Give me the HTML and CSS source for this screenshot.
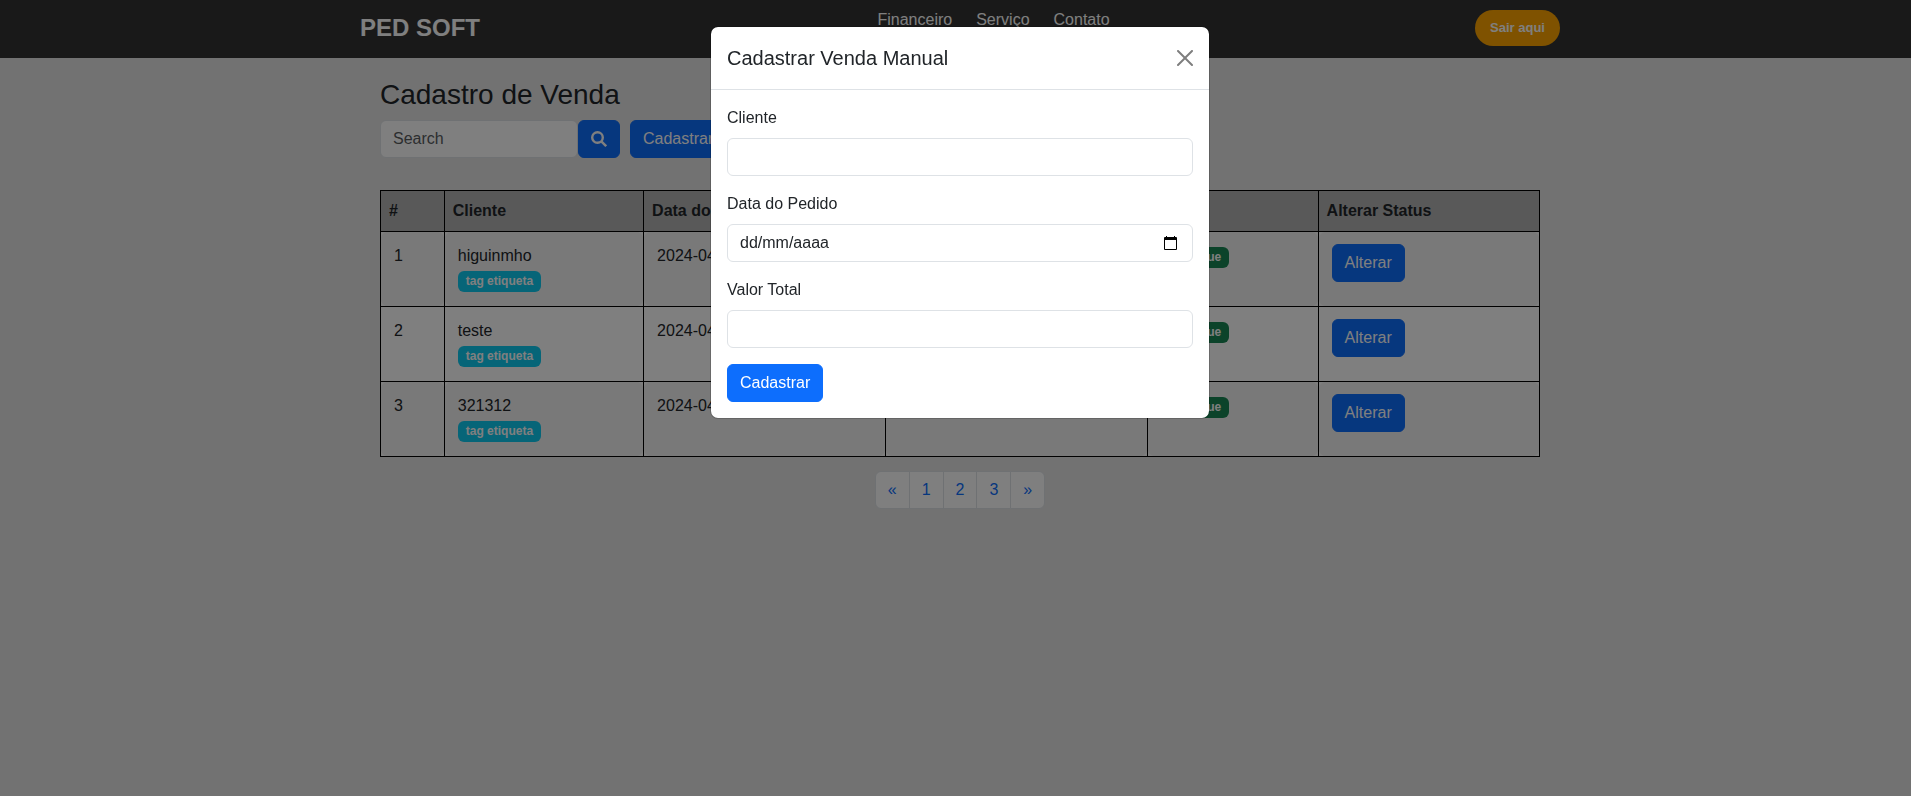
FILE: index.html
```html
<!DOCTYPE html>
<html lang="pt-BR">
<head>
<meta charset="utf-8">
<title>PED SOFT</title>
<link rel="stylesheet" href="styles.css">
</head>
<body>
<div class="page">
  <header class="topbar">
    <div class="topbar-inner">
      <span class="logo">PED SOFT</span>
      <nav>
        <ul class="menu">
          <li><a href="#">Financeiro</a></li>
          <li><a href="#">Serviço</a></li>
          <li><a href="#">Contato</a></li>
        </ul>
      </nav>
      <button class="logout" type="button">Sair aqui</button>
    </div>
  </header>
  <main class="content">
    <h1 class="title">Cadastro de Venda</h1>
    <div class="tools">
      <form class="search">
        <input class="field" type="text" placeholder="Search" aria-label="Search">
        <button class="btn" type="button" aria-label="Buscar">
          <svg class="search-icon" viewBox="0 0 16 16" aria-hidden="true"><circle cx="6.500" cy="6.500" r="5.300"/><path d="M10.300 10.300 15.200 15.200"/></svg>
        </button>
      </form>
      <button class="btn" type="button">Cadastrar Venda</button>
    </div>
    <table class="sales">
      <colgroup><col class="c-id"><col class="c-client"><col class="c-date"><col class="c-total"><col class="c-status"><col class="c-action"></colgroup>
      <thead>
        <tr><th>#</th><th>Cliente</th><th>Data do Pedido</th><th>Valor Total</th><th>Status</th><th>Alterar Status</th></tr>
      </thead>
      <tbody>
        <tr><td>1</td><td>higuinmho<span class="badge tag">tag etiqueta</span></td><td>2024-04-10</td><td>100</td><td><span class="badge done">Entregue</span></td><td><button class="btn" type="button">Alterar</button></td></tr>
        <tr><td>2</td><td>teste<span class="badge tag">tag etiqueta</span></td><td>2024-04-10</td><td>100</td><td><span class="badge done">Entregue</span></td><td><button class="btn" type="button">Alterar</button></td></tr>
        <tr><td>3</td><td>321312<span class="badge tag">tag etiqueta</span></td><td>2024-04-10</td><td>100</td><td><span class="badge done">Entregue</span></td><td><button class="btn" type="button">Alterar</button></td></tr>
      </tbody>
    </table>
    <nav aria-label="Páginas">
      <ul class="pagination">
        <li><a href="#">«</a></li>
        <li><a href="#">1</a></li>
        <li><a href="#">2</a></li>
        <li><a href="#">3</a></li>
        <li><a href="#">»</a></li>
      </ul>
    </nav>
  </main>
</div>
<div class="backdrop">
  <div class="modal" role="dialog" aria-modal="true" aria-labelledby="modal-title">
    <div class="modal-header">
      <h2 class="modal-title" id="modal-title">Cadastrar Venda Manual</h2>
      <button class="close" type="button" aria-label="Fechar">
        <svg viewBox="0 0 16 16" aria-hidden="true"><path d="M.293.293a1 1 0 0 1 1.414 0L8 6.586 14.293.293a1 1 0 1 1 1.414 1.414L9.414 8l6.293 6.293a1 1 0 0 1-1.414 1.414L8 9.414l-6.293 6.293a1 1 0 0 1-1.414-1.414L6.586 8 .293 1.707a1 1 0 0 1 0-1.414z"/></svg>
      </button>
    </div>
    <form class="modal-body">
      <div class="group">
        <label for="cliente">Cliente</label>
        <input class="field" id="cliente" type="text">
      </div>
      <div class="group">
        <label for="data">Data do Pedido</label>
        <div class="field date">
          <input id="data" type="text" placeholder="dd/mm/aaaa">
          <button type="button" aria-label="Abrir calendário">
            <svg viewBox="0 0 14 15" aria-hidden="true"><path d="M1 1h1V0h1v1h7V0h1v1h1a1 1 0 0 1 1 1v11a1 1 0 0 1-1 1H1a1 1 0 0 1-1-1V2a1 1 0 0 1 1-1zM1 4v9h11V4z" fill-rule="evenodd"/></svg>
          </button>
        </div>
      </div>
      <div class="group">
        <label for="valor">Valor Total</label>
        <input class="field" id="valor" type="text">
      </div>
      <button class="btn" type="button">Cadastrar</button>
    </form>
  </div>
</div>
</body>
</html>
```
FILE: styles.css
```css
*, *::before, *::after { box-sizing: border-box; }

body {
  margin: 0;
  overflow: hidden;
  background: #e5e5e5;
  color: #212529;
  font: 16px/24px "Liberation Sans", Arial, sans-serif;
}

button, input { font: inherit; color: inherit; }
button { cursor: pointer; }
a { text-decoration: none; }
ul { margin: 0; padding: 0; list-style: none; }

/* The layout is centred on the window plus a 9px gutter. */
.page {
  width: calc(100% + 9px);
  min-height: 100vh;
}

.topbar {
  padding: 8px 0 10px;
  background: #333;
  color: #fff;
}

.topbar-inner {
  display: flex;
  align-items: center;
  justify-content: space-between;
  max-width: 1200px;
  margin: 0 auto;
}

.logo { font-size: 24px; line-height: 36px; font-weight: 700; }

.menu {
  display: flex;
  gap: 24px;
  padding: 0 0 16px 32px;
}
.menu a { color: #fff; }

.logout {
  padding: 8px 15px;
  border: 0;
  border-radius: 20px;
  background: #ffa500;
  color: #fff;
  font-size: 13px;
  line-height: 20px;
  font-weight: 700;
}

.content {
  max-width: 1200px;
  margin: 0 auto;
  padding: 20px;
}

.title {
  margin: 0 0 8px;
  font-size: 28px;
  line-height: 34px;
  font-weight: 400;
}

.tools { display: flex; gap: 10px; margin-bottom: 32px; }
.search { display: flex; }
.search .field { width: 198px; }

.field {
  display: block;
  width: 100%;
  height: 38px;
  padding: 6px 12px;
  border: 1px solid #dee2e6;
  border-radius: 6px;
  background: #fff;
}
.field::placeholder { color: #595c5f; opacity: 1; }

.btn {
  padding: 6px 12px;
  border: 1px solid #0d6efd;
  border-radius: 6px;
  background: #0d6efd;
  color: #fff;
}

.search-icon {
  display: block;
  width: 16px;
  height: 16px;
  fill: none;
  stroke: #fff;
  stroke-width: 2.4;
}

.sales {
  width: 100%;
  border-collapse: collapse;
  table-layout: fixed;
  margin-bottom: 14px;
  background: #fff;
}
.c-id { width: 5.5%; }
.c-client { width: 17.2%; }
.c-date { width: 20.9%; }
.c-total { width: 22.6%; }
.c-status { width: 14.7%; }
.c-action { width: 19.1%; }

.sales th, .sales td {
  border: 1px solid #000;
  text-align: left;
  vertical-align: top;
}
.sales th { padding: 8px; background: #b3b3b3; }
.sales td { height: 75px; padding: 12px 13px; }

/* Shaded cells are rounded, so the white table shows at their corners. */
.sales tbody tr:nth-child(odd) td {
  background: radial-gradient(circle at 8px 8px, #f2f2f2 8px, transparent 9px) 0 0 / 16px 16px no-repeat,
    radial-gradient(circle at 8px 8px, #f2f2f2 8px, transparent 9px) 100% 0 / 16px 16px no-repeat,
    radial-gradient(circle at 8px 8px, #f2f2f2 8px, transparent 9px) 0 100% / 16px 16px no-repeat,
    radial-gradient(circle at 8px 8px, #f2f2f2 8px, transparent 9px) 100% 100% / 16px 16px no-repeat,
    linear-gradient(#f2f2f2, #f2f2f2) center / calc(100% - 16px) 100% no-repeat,
    linear-gradient(#f2f2f2, #f2f2f2) center / 100% calc(100% - 16px) no-repeat;
}

.badge {
  display: block;
  width: fit-content;
  padding: 4px 8px;
  border-radius: 6px;
  color: #fff;
  font-size: 12px;
  line-height: 13px;
  font-weight: 700;
}
.tag { margin-top: 3px; background: #0dcaf0; }
.done { margin-top: 3px; background: #198754; }

.pagination { display: flex; justify-content: center; }
.pagination a {
  display: block;
  padding: 6px 12px;
  border: 1px solid #dee2e6;
  background: #fff;
  color: #0d6efd;
}
.pagination li + li { margin-left: -1px; }
.pagination li:first-child a { border-radius: 6px 0 0 6px; }
.pagination li:last-child a { border-radius: 0 6px 6px 0; }

.backdrop {
  position: fixed;
  inset: 0 -9px 0 0;
  padding-top: 26px;
  background: rgba(0, 0, 0, .5);
}

.modal {
  max-width: 500px;
  margin: 0 auto;
  border: 1px solid rgba(0, 0, 0, .175);
  border-radius: 8px;
  background: #fff;
  background-clip: padding-box;
}

.modal-header {
  display: flex;
  align-items: center;
  justify-content: space-between;
  padding: 16px;
  border-bottom: 1px solid #dee2e6;
}

.modal-title { margin: 0; font-size: 20px; line-height: 30px; font-weight: 400; }

.close {
  padding: 0;
  border: 0;
  background: none;
  opacity: .5;
}
.close svg { display: block; width: 16px; height: 16px; }

.modal-body { padding: 16px; }
.group { margin-bottom: 16px; }
.group label { display: block; margin-bottom: 8px; }

.date { display: flex; align-items: center; padding-right: 14px; }
.date input {
  flex: 1;
  min-width: 0;
  padding: 0;
  border: 0;
  outline: 0;
  background: none;
}
.date input::placeholder { color: #212529; opacity: 1; }
.date button { padding: 0; border: 0; background: none; }
.date svg { display: block; width: 14px; height: 15px; fill: #000; }
```
